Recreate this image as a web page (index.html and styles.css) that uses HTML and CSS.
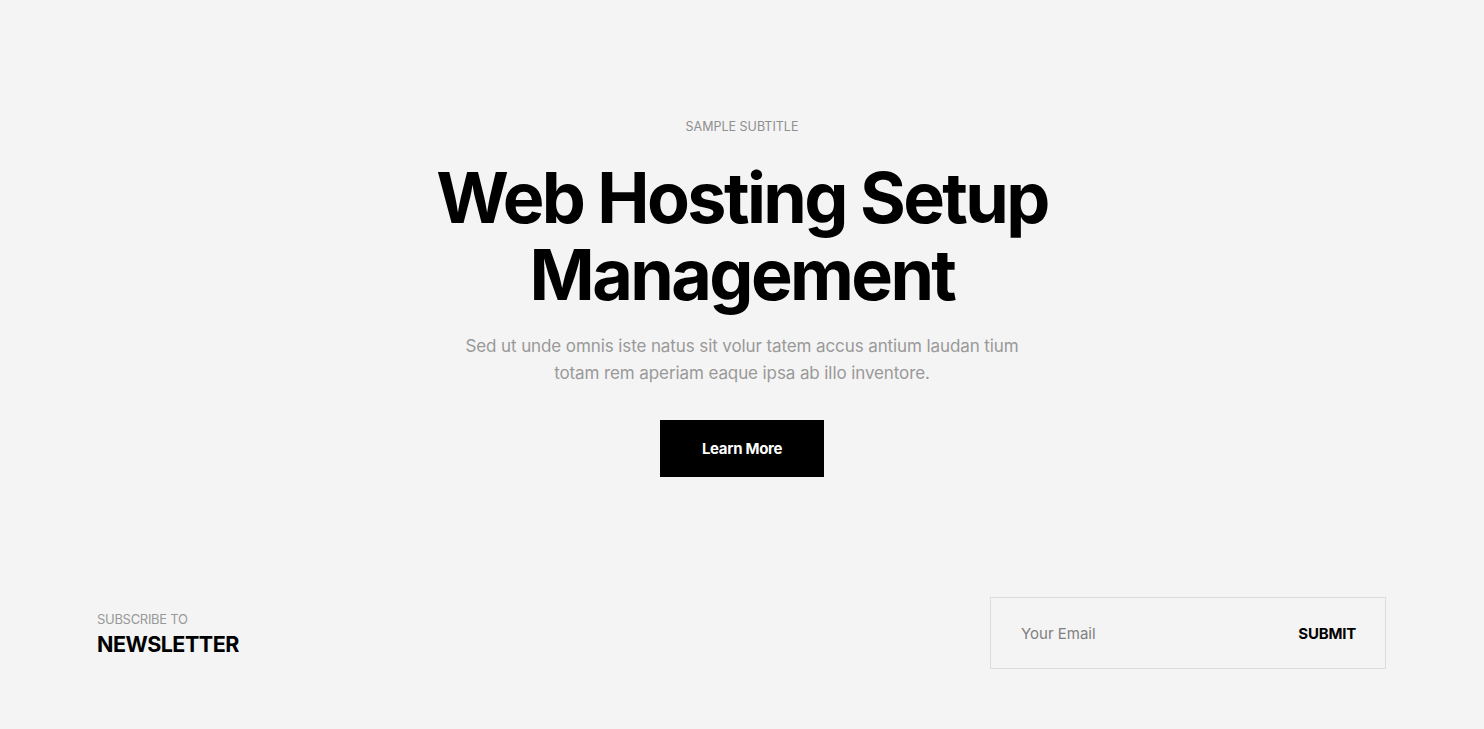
FILE: index.html
```html
<!DOCTYPE html>
<html lang="en">
<head>
<meta charset="utf-8">
<title>Web Hosting Setup Management</title>
<link rel="stylesheet" href="styles.css">
</head>
<body>
<main class="page">
  <section class="hero">
    <p class="subtitle">SAMPLE SUBTITLE</p>
    <h1 class="title">Web Hosting Setup<br>Management</h1>
    <p class="lead">Sed ut unde omnis iste natus sit volur tatem accus antium laudan tium<br>totam rem aperiam eaque ipsa ab illo inventore.</p>
    <a class="btn" href="#">Learn More</a>
  </section>
  <section class="newsletter">
    <div class="nl-text">
      <div class="nl-small">SUBSCRIBE TO</div>
      <div class="nl-big">NEWSLETTER</div>
    </div>
    <form class="nl-form">
      <input class="nl-input" type="email" placeholder="Your Email">
      <button class="nl-submit" type="button">SUBMIT</button>
    </form>
  </section>
</main>
</body>
</html>
```
FILE: styles.css
```css
* { box-sizing: border-box; }
html, body { margin: 0; padding: 0; }
body {
  background: #f4f4f4;
  font-family: Inter, "Noto Sans", "Liberation Sans", sans-serif;
  color: #000;
  height: 729px;
  overflow: hidden;
}
.page { display: flex; flex-direction: column; }
.hero {
  display: flex;
  flex-direction: column;
  align-items: center;
  text-align: center;
  padding-top: 119px;
}
.subtitle {
  margin: 0;
  font-size: 12.5px;
  line-height: 16px;
  color: #8f8f8f;
  letter-spacing: 0;
}
.title {
  margin: 24px 0 0;
  font-size: 70px;
  line-height: 77px;
  font-weight: 700;
  letter-spacing: -2.6px;
}
.lead {
  margin: 20px 0 0;
  font-size: 17px;
  line-height: 27px;
  color: #999;
  letter-spacing: -0.1px;
}
.btn {
  margin-top: 33px;
  width: 164px;
  height: 57px;
  display: flex;
  align-items: center;
  justify-content: center;
  background: #000;
  color: #fff;
  font-size: 15px;
  font-weight: 700;
  text-decoration: none;
  letter-spacing: -0.3px;
}
.newsletter {
  display: flex;
  justify-content: space-between;
  align-items: center;
  padding: 0 98px 0 97px;
  margin-top: 120px;
}
.nl-text { padding-top: 1px; }
.nl-small {
  font-size: 13px;
  line-height: 16px;
  color: #999;
  letter-spacing: -0.3px;
}
.nl-big {
  margin-top: 4px;
  font-size: 21.5px;
  line-height: 26px;
  font-weight: 700;
  letter-spacing: -0.5px;
}
.nl-form {
  display: flex;
  align-items: center;
  width: 396px;
  height: 72px;
  border: 1px solid #dcdcdc;
  padding: 0 29px 0 30px;
}
.nl-input {
  flex: 1;
  border: none;
  background: transparent;
  outline: none;
  font-family: inherit;
  font-size: 15px;
  color: #777;
  padding: 0;
}
.nl-input::placeholder { color: #808080; }
.nl-submit {
  border: none;
  background: transparent;
  padding: 0;
  font-family: inherit;
  font-size: 15px;
  font-weight: 700;
  color: #000;
  letter-spacing: -0.2px;
}
```
